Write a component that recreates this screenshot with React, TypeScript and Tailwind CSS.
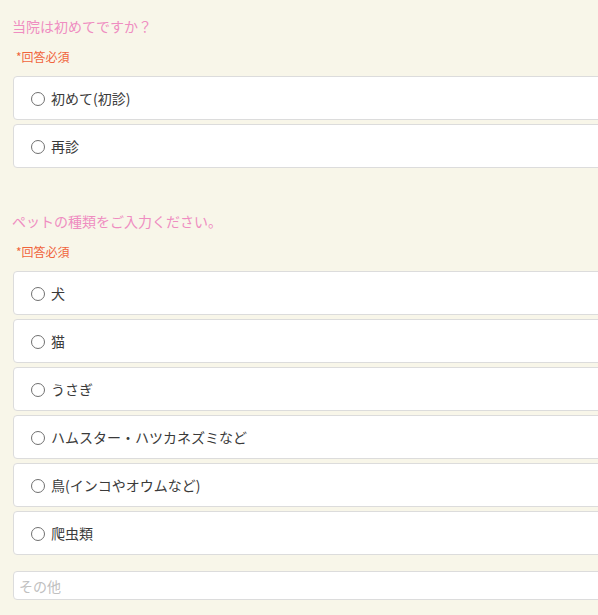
import React from 'react';

const font = { fontFamily: '"Noto Sans CJK JP", "Noto Sans", sans-serif' };

function Option({ label }: { label: string }) {
  return (
    <label className="flex h-[44px] w-[640px] items-center rounded-[4px] border border-[#dcdcdc] bg-white pl-[17px]">
      <span className="mt-[2px] h-[14px] w-[14px] shrink-0 rounded-full border-[1.5px] border-[#707070] bg-white" />
      <span className="ml-[6px] text-[14px] leading-[20px] text-[#3a3a3a]">{label}</span>
    </label>
  );
}

function Question({ title, options }: { title: string; options: string[] }) {
  return (
    <div>
      <h2 className="pl-[12px] text-[14px] leading-[20px] text-[#ef8dc1]">{title}</h2>
      <p className="mt-[12px] pl-[16px] text-[12px] leading-[18px] text-[#f0643c]">*回答必須</p>
      <div className="mt-[10px] flex flex-col gap-[4px] pl-[13px]">
        {options.map((o) => (
          <Option key={o} label={o} />
        ))}
      </div>
    </div>
  );
}

export default function App() {
  return (
    <div className="h-[615px] w-[598px] overflow-hidden bg-[#f8f6e9] pt-[16px]" style={font}>
      <Question title="当院は初めてですか？" options={['初めて(初診)', '再診']} />
      <div className="mt-[43px]">
        <Question
          title="ペットの種類をご入力ください。"
          options={['犬', '猫', 'うさぎ', 'ハムスター・ハツカネズミなど', '鳥(インコやオウムなど)', '爬虫類']}
        />
      </div>
      <div className="mt-[16px] pl-[13px]">
        <input
          placeholder="その他"
          className="h-[29px] w-[640px] rounded-[4px] border border-[#dcdcdc] bg-white px-[5px] text-[14px] text-[#333] outline-none placeholder:text-[#c0c0c0]"
          style={font}
        />
      </div>
    </div>
  );
}
